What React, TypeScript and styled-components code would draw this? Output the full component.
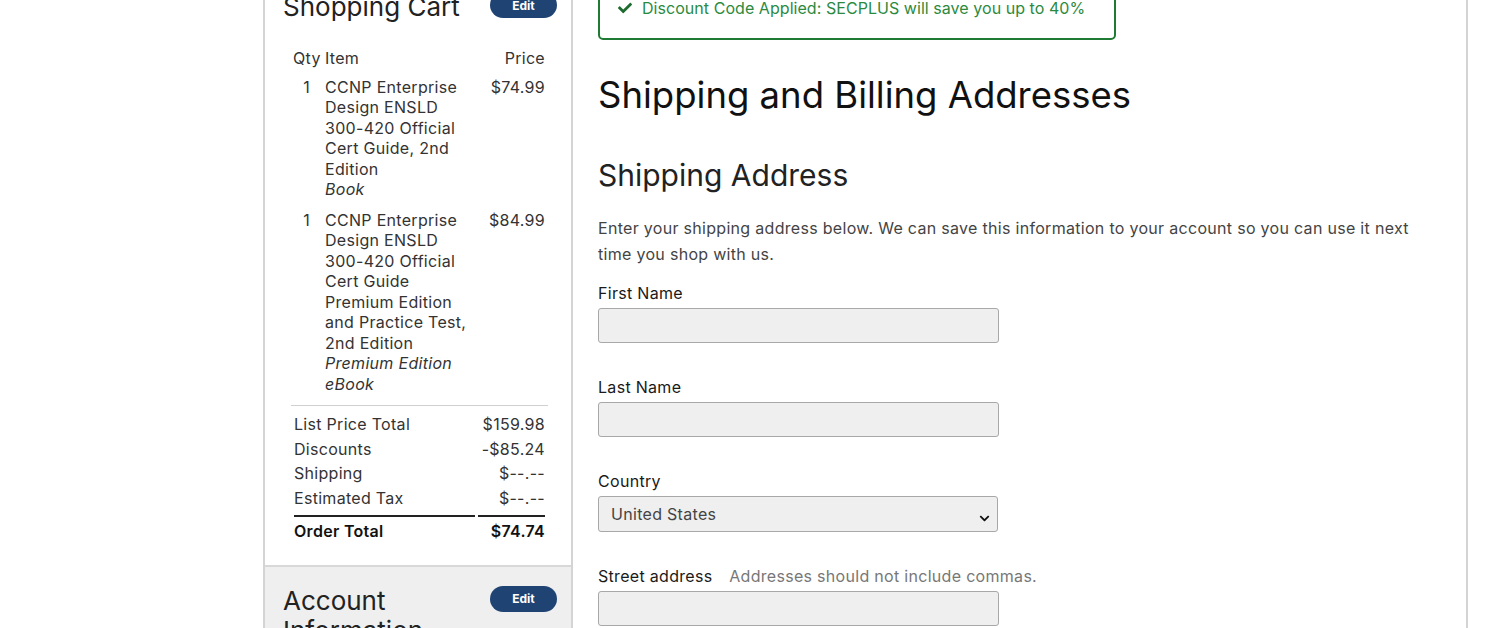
import styled, { createGlobalStyle } from 'styled-components'
import { FaCheck, FaChevronDown } from 'react-icons/fa'

const GlobalStyle = createGlobalStyle`
  body {
    margin: 0;
    background: #fff;
    font-family: Inter, "Open Sans", Arial, sans-serif;
    letter-spacing: 0.3px;
    color: #333;
    overflow: hidden;
  }
`

type Item = { qty: number; lines: string[]; format: string[]; price: string }

const items: Item[] = [
  {
    qty: 1,
    lines: ['CCNP Enterprise', 'Design ENSLD', '300-420 Official', 'Cert Guide, 2nd', 'Edition'],
    format: ['Book'],
    price: '$74.99',
  },
  {
    qty: 1,
    lines: [
      'CCNP Enterprise',
      'Design ENSLD',
      '300-420 Official',
      'Cert Guide',
      'Premium Edition',
      'and Practice Test,',
      '2nd Edition',
    ],
    format: ['Premium Edition', 'eBook'],
    price: '$84.99',
  },
]

const totals = [
  { label: 'List Price Total', value: '$159.98' },
  { label: 'Discounts', value: '-$85.24' },
  { label: 'Shipping', value: '$--.--' },
  { label: 'Estimated Tax', value: '$--.--' },
]

const App = () => {
  return (
    <>
      <GlobalStyle />
      <Shell>
        <Sidebar>
          <CartSection>
            <PanelHead>
              <PanelTitle>Shopping Cart</PanelTitle>
              <EditButton>Edit</EditButton>
            </PanelHead>
            <CartTable>
              <thead>
                <tr>
                  <HeadCell>Qty</HeadCell>
                  <HeadCell $align="left">Item</HeadCell>
                  <HeadCell>Price</HeadCell>
                </tr>
              </thead>
              <tbody>
                {items.map((it, i) => (
                  <tr key={i}>
                    <QtyCell>{it.qty}</QtyCell>
                    <ItemCell>
                      {it.lines.map((l) => (
                        <div key={l}>{l}</div>
                      ))}
                      {it.format.map((f) => (
                        <Format key={f}>{f}</Format>
                      ))}
                    </ItemCell>
                    <PriceCell>{it.price}</PriceCell>
                  </tr>
                ))}
              </tbody>
            </CartTable>
            <TotalsTable>
              <tbody>
                {totals.map((t) => (
                  <tr key={t.label}>
                    <TotalLabel>{t.label}</TotalLabel>
                    <TotalValue>{t.value}</TotalValue>
                  </tr>
                ))}
                <tr>
                  <GrandLabel>Order Total</GrandLabel>
                  <GrandValue>$74.74</GrandValue>
                </tr>
              </tbody>
            </TotalsTable>
          </CartSection>
          <AccountSection>
            <PanelHead>
              <PanelTitle>
                Account
                <br />
                Information
              </PanelTitle>
              <EditButton>Edit</EditButton>
            </PanelHead>
          </AccountSection>
        </Sidebar>

        <Main>
          <Notice>
            <FaCheck size={14} />
            <span>Discount Code Applied: SECPLUS will save you up to 40%</span>
          </Notice>
          <PageTitle>Shipping and Billing Addresses</PageTitle>
          <SectionTitle>Shipping Address</SectionTitle>
          <Intro>
            Enter your shipping address below. We can save this information to your account so you can use it next
            time you shop with us.
          </Intro>

          <Field>
            <Label>First Name</Label>
            <TextInput />
          </Field>
          <Field>
            <Label>Last Name</Label>
            <TextInput />
          </Field>
          <Field>
            <Label>Country</Label>
            <SelectWrap>
              <Select defaultValue="US">
                <option value="US">United States</option>
              </Select>
              <Chevron>
                <FaChevronDown size={11} />
              </Chevron>
            </SelectWrap>
          </Field>
          <Field>
            <Label>
              Street address <Hint>Addresses should not include commas.</Hint>
            </Label>
            <TextInput />
          </Field>
        </Main>
      </Shell>
    </>
  )
}

export default App

const Shell = styled.div`
  margin: -30px 0 0 263px;
  width: 1205px;
  min-height: 700px;
  box-sizing: border-box;
  border-left: 2px solid #d4d4d4;
  border-right: 2px solid #d4d4d4;
  display: flex;
`

const Sidebar = styled.aside`
  width: 308px;
  box-sizing: border-box;
  flex-shrink: 0;
  border-right: 2px solid #d4d4d4;
  display: flex;
  flex-direction: column;
`

const CartSection = styled.section`
  padding: 22px 14px 21px 18px;
  background: #fff;
  border-bottom: 2px solid #d8d8d8;
`

const AccountSection = styled.section`
  flex: 1;
  padding: 19px 14px 20px 18px;
  background: #efefef;
`

const PanelHead = styled.div`
  display: flex;
  justify-content: space-between;
  align-items: flex-start;
`

const PanelTitle = styled.h2`
  margin: 0;
  font-size: 26px;
  line-height: 30px;
  font-weight: 400;
  letter-spacing: 0;
  color: #222;
`

const EditButton = styled.button`
  width: 67px;
  height: 26px;
  border: none;
  border-radius: 13px;
  background: #1f4474;
  color: #fff;
  font-family: inherit;
  font-size: 12px;
  font-weight: 700;
  letter-spacing: 0;
  padding: 0;
`

const CartTable = styled.table`
  margin: 26px 0 0 10px;
  width: 252px;
  border-collapse: collapse;
  font-size: 16px;
  line-height: 20.5px;
  color: #333;
`

const HeadCell = styled.th<{ $align?: string }>`
  font-weight: 400;
  text-align: ${({ $align }) => $align || 'right'};
  padding: 0 0 3px;
  &:first-child {
    text-align: left;
    width: 32px;
  }
`

const QtyCell = styled.td`
  vertical-align: top;
  text-align: right;
  padding: 5px 15px 5px 0;
`

const ItemCell = styled.td`
  vertical-align: top;
  padding: 5px 0;
  width: 150px;
`

const Format = styled.div`
  font-style: italic;
`

const PriceCell = styled.td`
  vertical-align: top;
  text-align: right;
  padding: 5px 0;
`

const TotalsTable = styled.table`
  margin: 6px 0 0 8px;
  width: 257px;
  border-collapse: separate;
  border-spacing: 3px 0;
  border-top: 1px solid #d0d0d0;
  padding-top: 6px;
  font-size: 16px;
  line-height: 24.5px;
  color: #333;
  tr:nth-child(4) td {
    padding-bottom: 5px;
  }
`

const TotalLabel = styled.td`
  padding: 0;
`

const TotalValue = styled.td`
  padding: 0;
  text-align: right;
  width: 67px;
`

const GrandLabel = styled.td`
  border-top: 2px solid #222;
  padding: 2px 0 0;
  font-weight: 600;
  color: #111;
`

const GrandValue = styled(GrandLabel)`
  text-align: right;
`

const Main = styled.main`
  flex: 1;
  padding: 20px 26px 0 25px;
`

const Notice = styled.div`
  width: 518px;
  box-sizing: border-box;
  height: 50px;
  border: 2px solid #1f7a33;
  border-radius: 5px;
  padding: 6px 18px;
  display: flex;
  align-items: flex-start;
  gap: 10px;
  color: #2c8a3f;
  font-size: 16px;
  line-height: 20px;
  letter-spacing: 0.05px;
  white-space: nowrap;
  svg {
    margin-top: 3px;
    flex-shrink: 0;
    color: #1f6b2f;
  }
`

const PageTitle = styled.h1`
  margin: 30px 0 0;
  font-size: 36.5px;
  line-height: 50px;
  font-weight: 400;
  letter-spacing: 0;
  color: #111;
`

const SectionTitle = styled.h2`
  margin: 35px 0 0;
  font-size: 30px;
  line-height: 40px;
  font-weight: 400;
  letter-spacing: 0;
  color: #222;
`

const Intro = styled.p`
  margin: 20px 0 0;
  font-size: 16px;
  line-height: 26px;
  color: #444;
`

const Field = styled.div`
  margin-top: 16px;
  & + & {
    margin-top: 34px;
  }
`

const Label = styled.label`
  display: block;
  font-size: 16px;
  line-height: 20px;
  color: #1a1a1a;
  margin-bottom: 5px;
`

const Hint = styled.span`
  margin-left: 12px;
  color: #777;
`

const TextInput = styled.input`
  display: block;
  width: 401px;
  height: 35px;
  box-sizing: border-box;
  background: #efefef;
  border: 1px solid #a8a8a8;
  border-radius: 3px;
`

const SelectWrap = styled.div`
  position: relative;
  width: 400px;
`

const Select = styled.select`
  appearance: none;
  display: block;
  width: 100%;
  height: 36px;
  box-sizing: border-box;
  background: #efefef;
  border: 1px solid #a8a8a8;
  border-radius: 3px;
  padding: 0 12px;
  font-family: inherit;
  font-size: 16px;
  letter-spacing: 0.3px;
  color: #444;
`

const Chevron = styled.span`
  position: absolute;
  right: 8px;
  top: 12px;
  color: #111;
  pointer-events: none;
`
